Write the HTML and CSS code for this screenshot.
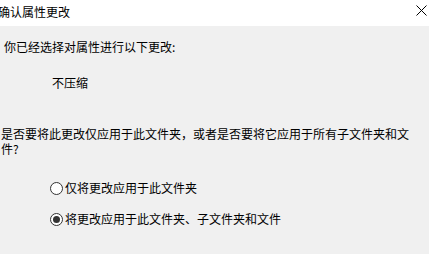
FILE: index.html
```html
<!DOCTYPE html>
<html lang="zh-CN">
<head>
<meta charset="utf-8">
<link rel="stylesheet" href="styles.css">
</head>
<body>
<div class="titlebar">
  <span class="title">确认属性更改</span>
  <span class="close"><svg width="11" height="11" viewBox="0 0 11 11"><path d="M0.5 0.5L10.5 10.5M10.5 0.5L0.5 10.5" stroke="#000" stroke-width="1" fill="none"/></svg></span>
</div>
<div class="content">
  <div class="line l1">你已经选择对属性进行以下更改:</div>
  <div class="line l2">不压缩</div>
  <div class="para">是否要将此更改仅应用于此文件夹，或者是否要将它应用于所有子文件夹和文件?</div>
  <div class="options">
    <div class="opt"><span class="radio"></span><span class="label">仅将更改应用于此文件夹</span></div>
    <div class="opt"><span class="radio checked"></span><span class="label">将更改应用于此文件夹、子文件夹和文件</span></div>
  </div>
</div>
</body>
</html>
```
FILE: styles.css
```css
html, body {
  margin: 0;
  padding: 0;
  background: #f0f0f0;
  width: 429px;
  height: 254px;
  overflow: hidden;
  font-family: "Noto Sans CJK SC", "Noto Sans", sans-serif;
  font-size: 12px;
  color: #000;
}
.titlebar {
  height: 26px;
  background: #fff;
  display: flex;
  align-items: center;
  justify-content: space-between;
}
.title {
  margin-left: -2px;
  line-height: 16px;
  margin-top: -2px;
}
.close {
  display: flex;
  margin-right: 2px;
  margin-top: -6px;
}
.content {
  display: flex;
  flex-direction: column;
}
.line {
  line-height: 16px;
  height: 16px;
}
.l1 {
  margin-top: 13px;
  margin-left: 4px;
}
.l2 {
  margin-top: 20px;
  margin-left: 52px;
}
.para {
  margin-top: 35px;
  margin-left: 1px;
  width: 414px;
  line-height: 15px;
}
.options {
  display: flex;
  flex-direction: column;
  gap: 15px;
  margin-top: 24px;
  margin-left: 50px;
}
.opt {
  display: flex;
  align-items: center;
  height: 16px;
}
.radio {
  width: 11px;
  height: 11px;
  border: 1px solid #333;
  border-radius: 50%;
  background: #fff;
  box-sizing: content-box;
  display: flex;
  align-items: center;
  justify-content: center;
}
.radio.checked::after {
  content: "";
  width: 7px;
  height: 7px;
  border-radius: 50%;
  background: #333;
}
.label {
  margin-left: 2px;
  line-height: 16px;
}
```
